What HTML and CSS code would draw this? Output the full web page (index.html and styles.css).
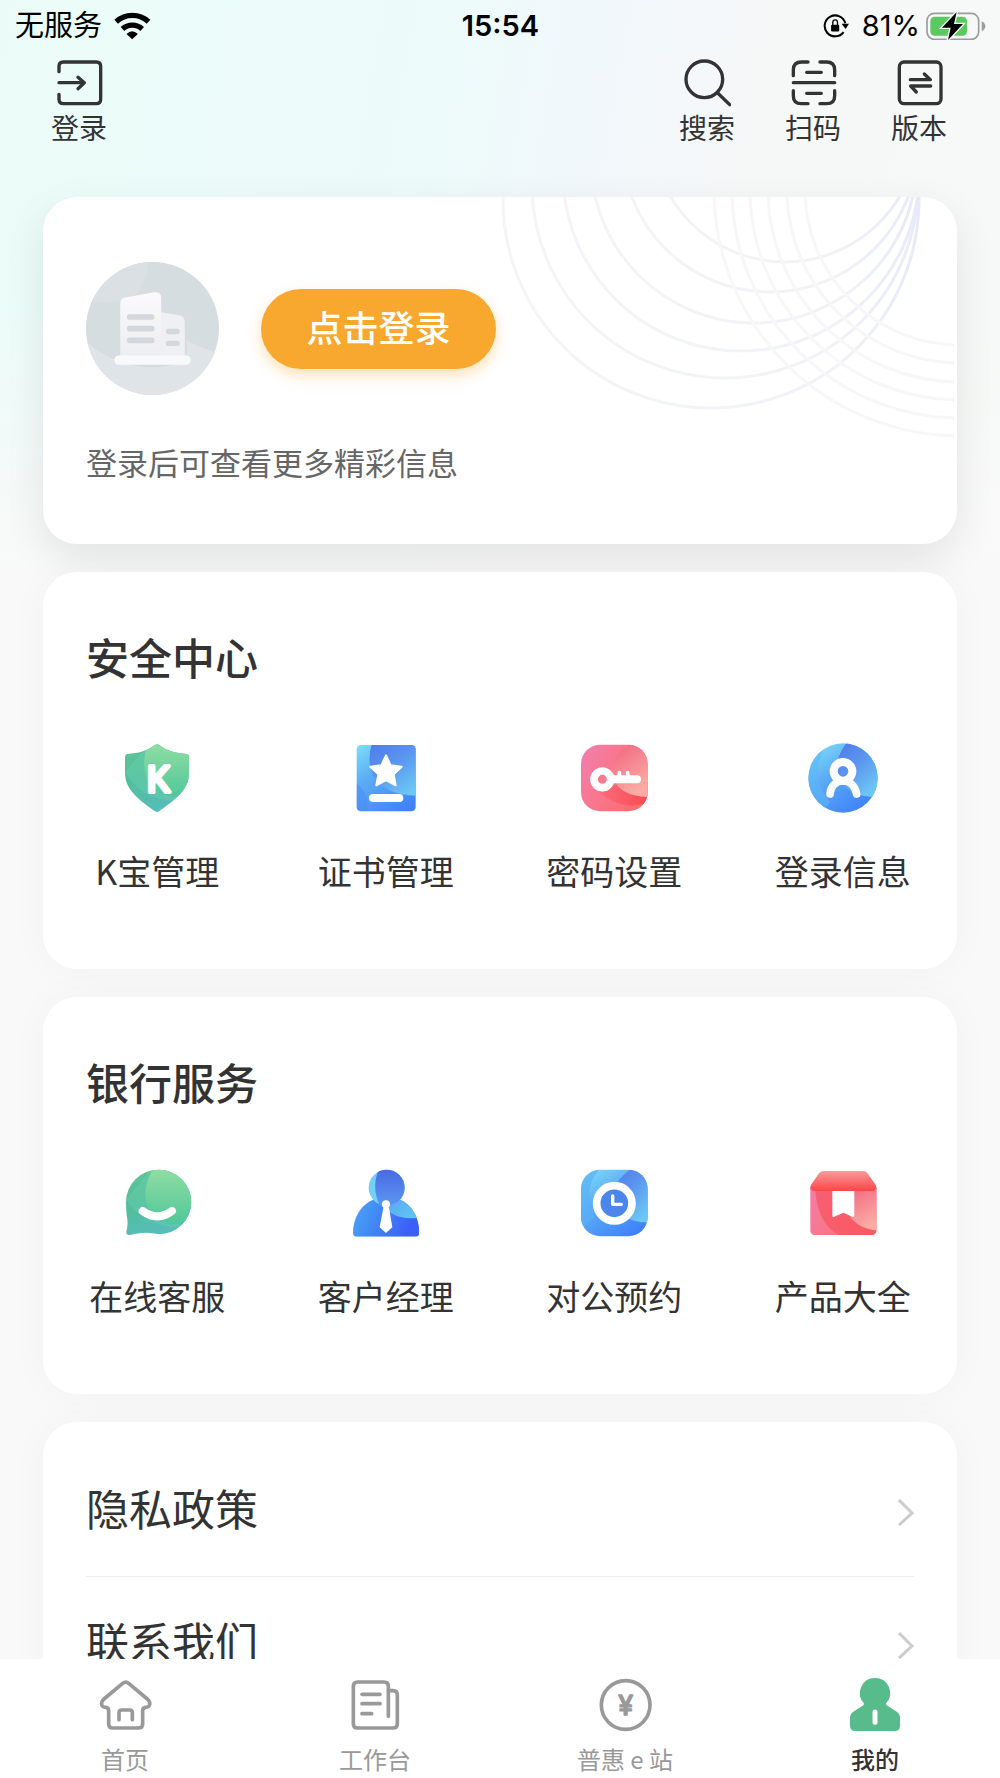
FILE: index.html
```html
<!DOCTYPE html>
<html lang="zh-CN">
<head>
    <meta charset="UTF-8">
    <meta name="viewport" content="width=device-width, initial-scale=1.0">
    <title>我的</title>
    <link rel="stylesheet" href="styles.css">
</head>
<body>
    <div class="app">
        <div class="page">
            <!-- 状态栏 -->
            <div class="status-bar">
                <div class="status-side">
                    <span>无服务</span>
                    <svg class="wifi" viewBox="0 0 110 84" aria-hidden="true">
                        <path d="M6 29A72 72 0 0 1 103 29M25 51A43 43 0 0 1 84 51" fill="none" stroke="#000" stroke-width="16"/>
                        <path d="M54 82L37 66Q54 49 71 66Z"/>
                    </svg>
                </div>
                <span class="status-time">15:54</span>
                <div class="status-side status-right">
                    <svg class="rotate-lock" viewBox="0 0 80 76" aria-hidden="true">
                        <path d="M61 56A31 31 0 1 1 66 30" fill="none" stroke="#000" stroke-width="6"/>
                        <path d="M55 31H77L67 47Z"/>
                        <rect x="24" y="34" width="24" height="20" rx="3"/>
                        <path d="M29 36V28Q29 20 36 20T43 28V36" fill="none" stroke="#000" stroke-width="4"/>
                    </svg>
                    <span>81%</span>
                    <svg class="battery" viewBox="0 0 180 84" aria-hidden="true">
                        <rect x="3" y="4" width="155" height="78" rx="22" fill="none" stroke="#9a9d9b" stroke-width="5"/>
                        <path d="M167 28Q178 34 178 43T167 58Z" fill="#9a9d9b"/>
                        <rect x="13" y="14" width="110" height="57" rx="13" fill="#5bc95f"/>
                        <path d="M92 0L48 47H74L66 84L111 36H84Z" stroke="#f4faf6" stroke-width="8" paint-order="stroke"/>
                    </svg>
                </div>
            </div>

            <!-- 顶部操作 -->
            <header class="top-actions">
                <button type="button" class="action">
                    <svg viewBox="0 0 144 144" aria-hidden="true"><path d="M12 38V22Q12 9 25 9H124Q137 9 137 22V121Q137 134 124 134H25Q12 134 12 121V106M12 71H88M69 55L88 71L69 89"/></svg>
                    <span>登录</span>
                </button>
                <div class="action-group">
                    <button type="button" class="action">
                        <svg viewBox="0 0 144 144" aria-hidden="true"><circle cx="64" cy="61" r="55"/><path d="M104 102L140 137"/></svg>
                        <span>搜索</span>
                    </button>
                    <button type="button" class="action">
                        <svg viewBox="0 0 144 144" aria-hidden="true"><path d="M13 50V33Q13 9 37 9H57M93 9H113Q137 9 137 33V50M137 95V110Q137 134 113 134H93M57 134H37Q13 134 13 110V95M13 71H137M53 40H97M53 103H97"/></svg>
                        <span>扫码</span>
                    </button>
                    <button type="button" class="action">
                        <svg viewBox="0 0 144 144" aria-hidden="true"><rect x="13" y="9" width="125" height="125" rx="14"/><path d="M46 62H106L88 45M107 81H47L64 99"/></svg>
                        <span>版本</span>
                    </button>
                </div>
            </header>

            <main class="cards">
                <!-- 登录卡片 -->
                <section class="card login-card">
                    <svg class="rings" viewBox="0 0 459 250" aria-hidden="true">
                        <defs>
                            <linearGradient id="ringLine" gradientUnits="userSpaceOnUse" x1="0" y1="0" x2="430" y2="0">
                                <stop offset="0" stop-color="#f4f5f7"/>
                                <stop offset=".8" stop-color="#f1f2f7"/>
                                <stop offset="1" stop-color="#e6e9fa"/>
                            </linearGradient>
                        </defs>
                        <g fill="none" stroke="url(#ringLine)" stroke-width="3">
                            <circle cx="216" cy="3" r="208"/>
                            <circle cx="230" cy="-12" r="193"/>
                            <circle cx="246" cy="-24" r="178"/>
                            <circle cx="259" cy="-37" r="163"/>
                            <circle cx="275" cy="-53" r="148"/>
                            <circle cx="290" cy="-68" r="133"/>
                        </g>
                        <g fill="none" stroke="#f7f7f9" stroke-width="3">
                            <circle cx="465" cy="-7" r="246"/>
                            <circle cx="465" cy="-7" r="228"/>
                            <circle cx="465" cy="-7" r="210"/>
                            <circle cx="465" cy="-7" r="192"/>
                            <circle cx="465" cy="-7" r="173"/>
                            <circle cx="465" cy="-7" r="155"/>
                        </g>
                    </svg>
                    <div class="login-row">
                        <svg class="avatar" viewBox="0 0 400 400" aria-hidden="true">
                            <defs>
                                <clipPath id="avatarClip"><circle cx="200" cy="200" r="200"/></clipPath>
                                <linearGradient id="tower" x1="0" y1="0" x2="0" y2="1">
                                    <stop offset="0" stop-color="#fbf9fb"/>
                                    <stop offset="1" stop-color="#eceef1"/>
                                </linearGradient>
                            </defs>
                            <g clip-path="url(#avatarClip)">
                                <rect width="400" height="400" fill="#d6dde0"/>
                                <path d="M0 0H188Q180 70 140 110Q80 130 0 115Z" fill="#dbe0e5"/>
                                <path d="M0 240Q120 340 260 310Q320 280 300 235Q350 260 400 275V400H0Z" fill="#dfe4e8"/>
                            </g>
                            <path d="M222 285V150L283 161Q297 165 297 180V285Z" fill="#eef0f3"/>
                            <path d="M103 285V126Q103 110 118 107L205 91Q226 89 226 107V285Z" fill="url(#tower)"/>
                            <rect x="85" y="281" width="230" height="28" rx="14" fill="#f8f9fa"/>
                            <g fill="#d3d8dc">
                                <rect x="123" y="157" width="83" height="17" rx="8"/>
                                <rect x="123" y="192" width="83" height="17" rx="8"/>
                                <rect x="123" y="227" width="83" height="17" rx="8"/>
                                <rect x="240" y="201" width="42" height="16" rx="8"/>
                                <rect x="240" y="237" width="42" height="16" rx="8"/>
                            </g>
                        </svg>
                        <button type="button" class="login-button">点击登录</button>
                    </div>
                    <p class="login-tip">登录后可查看更多精彩信息</p>
                </section>

                <!-- 安全中心 -->
                <section class="card service-card">
                    <h2>安全中心</h2>
                    <div class="service-grid">
                        <a class="service" href="#">
                            <svg viewBox="0 0 216 216" aria-hidden="true">
                                <defs>
                                    <linearGradient id="greenDeep" x1="0" y1="0" x2=".4" y2="1">
                                        <stop offset="0" stop-color="#62c796"/>
                                        <stop offset=".5" stop-color="#52be9b"/>
                                        <stop offset="1" stop-color="#56bdbb"/>
                                    </linearGradient>
                                    <linearGradient id="greenLight" x1="0" y1="0" x2="0" y2="1">
                                        <stop offset="0" stop-color="#92dea2"/>
                                        <stop offset="1" stop-color="#50c79b"/>
                                    </linearGradient>
                                    <clipPath id="shieldClip"><path d="M100 10Q108 4 116 10C138 27 165 34 196 36Q204 37 204 45V92C204 142 166 170 114 208Q108 212 102 208C50 170 12 142 12 92V45Q12 37 20 36C51 34 78 27 100 10Z"/></clipPath>
                                </defs>
                                <g clip-path="url(#shieldClip)">
                                    <rect width="216" height="216" fill="url(#greenDeep)"/>
                                    <path d="M12 90Q60 170 150 176L216 150V0H90Z" fill="#6bd0b0" opacity=".45"/>
                                    <path d="M80 0Q55 90 90 135Q125 168 180 163L216 130V0Z" fill="url(#greenLight)"/>
                                </g>
                                <text class="shield-letter" x="112" y="149">K</text>
                            </svg>
                            <span>K宝管理</span>
                        </a>
                        <a class="service" href="#">
                            <svg viewBox="0 0 216 216" aria-hidden="true">
                                <defs>
                                    <linearGradient id="blueBase" x1="0" y1="0" x2=".7" y2="1">
                                        <stop offset="0" stop-color="#84e8f8"/>
                                        <stop offset=".45" stop-color="#5cacf5"/>
                                        <stop offset="1" stop-color="#3f82fa"/>
                                    </linearGradient>
                                    <linearGradient id="blueTop" x1="0" y1="0" x2=".7" y2="1">
                                        <stop offset="0" stop-color="#4f78e8"/>
                                        <stop offset=".5" stop-color="#5b96ef"/>
                                        <stop offset="1" stop-color="#6cc8f4"/>
                                    </linearGradient>
                                    <clipPath id="bookClip"><rect x="20" y="9" width="177" height="199" rx="13"/></clipPath>
                                </defs>
                                <g clip-path="url(#bookClip)">
                                    <rect width="216" height="216" fill="url(#blueBase)"/>
                                    <path d="M20 125Q60 155 50 208H20Z" fill="#4a8cf4" opacity=".5"/>
                                    <path d="M67 0Q48 60 72 105Q112 165 216 161V0Z" fill="url(#blueTop)"/>
                                </g>
                                <path d="M108 40L122 70L155 74L131 97L137 130L108 114L79 130L85 97L61 74L94 70Z" fill="#fff" stroke="#fff" stroke-width="6" stroke-linejoin="round"/>
                                <rect x="57" y="156" width="103" height="24" rx="12" fill="#fff"/>
                            </svg>
                            <span>证书管理</span>
                        </a>
                        <a class="service" href="#">
                            <svg viewBox="0 0 216 216" aria-hidden="true">
                                <defs>
                                    <linearGradient id="pinkBase" x1="0" y1="0" x2="1" y2=".5">
                                        <stop offset="0" stop-color="#ef7fb6"/>
                                        <stop offset=".5" stop-color="#f9778e"/>
                                        <stop offset="1" stop-color="#fa6b72"/>
                                    </linearGradient>
                                    <linearGradient id="pinkTop" x1="0" y1="0" x2=".5" y2="1">
                                        <stop offset="0" stop-color="#f0607d"/>
                                        <stop offset="1" stop-color="#fcaca4"/>
                                    </linearGradient>
                                    <linearGradient id="redBand" x1="0" y1="0" x2="1" y2="0">
                                        <stop offset="0" stop-color="#f9707e"/>
                                        <stop offset="1" stop-color="#fa4a50"/>
                                    </linearGradient>
                                    <clipPath id="squareClip"><rect x="9" y="8" width="200" height="200" rx="58"/></clipPath>
                                </defs>
                                <g clip-path="url(#squareClip)">
                                    <rect width="216" height="216" fill="url(#pinkBase)"/>
                                    <path d="M50 135Q115 210 209 182V120Z" fill="url(#redBand)"/>
                                    <path d="M165 0Q94 45 101 100Q120 165 216 165V0Z" fill="url(#pinkTop)"/>
                                </g>
                                <circle cx="73" cy="112" r="25" fill="none" stroke="#fff" stroke-width="23"/>
                                <path d="M105 112H177" fill="none" stroke="#fff" stroke-width="24" stroke-linecap="round"/>
                                <path d="M124 105V92M149 105V92" fill="none" stroke="#fff" stroke-width="11" stroke-linecap="round"/>
                            </svg>
                            <span>密码设置</span>
                        </a>
                        <a class="service" href="#">
                            <svg viewBox="0 0 216 216" aria-hidden="true">
                                <defs>
                                    <clipPath id="roundClip"><circle cx="108" cy="108" r="104"/></clipPath>
                                </defs>
                                <g clip-path="url(#roundClip)">
                                    <rect width="216" height="216" fill="url(#blueBase)"/>
                                    <path d="M0 80Q20 0 60 0Q0 110 70 180L40 216H0Z" fill="#5cb6f8" opacity=".6"/>
                                    <path d="M120 0Q70 70 100 115Q130 168 216 165V0Z" fill="url(#blueTop)"/>
                                </g>
                                <circle cx="108" cy="88" r="28" fill="none" stroke="#fff" stroke-width="24"/>
                                <path d="M69 156C72 130 88 117 108 117S144 130 149 156" fill="none" stroke="#fff" stroke-width="23" stroke-linecap="round"/>
                            </svg>
                            <span>登录信息</span>
                        </a>
                    </div>
                </section>

                <!-- 银行服务 -->
                <section class="card service-card">
                    <h2>银行服务</h2>
                    <div class="service-grid">
                        <a class="service" href="#">
                            <svg viewBox="0 0 216 216" aria-hidden="true">
                                <defs>
                                    <clipPath id="bubbleClip"><path d="M114 8A97 97 0 1 1 114 202Q88 195 62 198Q44 200 26 204Q15 205 16 194Q23 170 17 145Q15 125 15 105A98 97 0 0 1 114 8Z"/></clipPath>
                                </defs>
                                <g clip-path="url(#bubbleClip)">
                                    <rect width="216" height="216" fill="url(#greenDeep)"/>
                                    <path d="M15 100Q70 175 170 182L216 150V0H95Z" fill="#6bd0b0" opacity=".4"/>
                                    <path d="M98 0Q55 80 85 125Q125 178 190 171L216 150V0Z" fill="url(#greenLight)"/>
                                </g>
                                <path d="M65 132Q109 164 153 132" fill="none" stroke="#fff" stroke-width="24" stroke-linecap="round"/>
                            </svg>
                            <span>在线客服</span>
                        </a>
                        <a class="service" href="#">
                            <svg viewBox="0 0 216 216" aria-hidden="true">
                                <defs>
                                    <linearGradient id="coat" x1="0" y1="0" x2="1" y2=".4">
                                        <stop offset="0" stop-color="#54b4f6"/>
                                        <stop offset=".5" stop-color="#438df5"/>
                                        <stop offset="1" stop-color="#3c5ffa"/>
                                    </linearGradient>
                                    <linearGradient id="chest" x1="0" y1="0" x2="1" y2=".5">
                                        <stop offset="0" stop-color="#5c9cf1"/>
                                        <stop offset="1" stop-color="#5cc4f4"/>
                                    </linearGradient>
                                    <linearGradient id="face" x1="0" y1="0" x2="0" y2="1">
                                        <stop offset="0" stop-color="#4768e4"/>
                                        <stop offset="1" stop-color="#5d98f0"/>
                                    </linearGradient>
                                    <clipPath id="headClip"><circle cx="110" cy="62" r="54"/></clipPath>
                                    <clipPath id="coatClip"><path d="M70 98H150C184 112 208 150 208 197Q208 209 196 209H21Q9 209 9 197C9 150 34 112 70 98Z"/></clipPath>
                                </defs>
                                <g clip-path="url(#coatClip)">
                                    <rect width="216" height="216" fill="url(#coat)"/>
                                    <path d="M75 90Q120 165 210 152V90Z" fill="url(#chest)"/>
                                </g>
                                <g clip-path="url(#headClip)">
                                    <rect width="216" height="130" fill="#72d0f6"/>
                                    <path d="M90 0Q60 60 92 120H170V0Z" fill="url(#face)"/>
                                </g>
                                <circle cx="108" cy="112" r="12" fill="#fff"/>
                                <path d="M100 122H117L127 181L108 198L89 181Z" fill="#fff"/>
                            </svg>
                            <span>客户经理</span>
                        </a>
                        <a class="service" href="#">
                            <svg viewBox="0 0 216 216" aria-hidden="true">
                                <g clip-path="url(#squareClip)">
                                    <rect width="216" height="216" fill="url(#blueBase)"/>
                                    <path d="M0 0H70Q10 60 50 150L0 190Z" fill="#58b0f6" opacity=".7"/>
                                    <path d="M168 0Q90 50 110 110Q135 168 216 166V0Z" fill="url(#blueTop)"/>
                                </g>
                                <circle cx="109" cy="109" r="53" fill="#4d86ea" stroke="#fff" stroke-width="23"/>
                                <path d="M104 87V112H130" fill="none" stroke="#fff" stroke-width="10" stroke-linecap="round" stroke-linejoin="round"/>
                            </svg>
                            <span>对公预约</span>
                        </a>
                        <a class="service" href="#">
                            <svg viewBox="0 0 216 216" aria-hidden="true">
                                <defs>
                                    <linearGradient id="roof" x1="0" y1="0" x2="0" y2="1">
                                        <stop offset="0" stop-color="#fb9a9b"/>
                                        <stop offset="1" stop-color="#fb4547"/>
                                    </linearGradient>
                                    <clipPath id="shopClip"><rect x="10" y="50" width="198" height="154" rx="13"/></clipPath>
                                </defs>
                                <g clip-path="url(#shopClip)">
                                    <rect width="216" height="216" fill="url(#pinkBase)"/>
                                    <path d="M24 60Q30 180 110 210H216V60Z" fill="#f9505a" opacity=".65"/>
                                    <path d="M112 60Q100 180 216 192V60Z" fill="url(#pinkTop)"/>
                                </g>
                                <path d="M50 12H168Q178 12 184 22L206 54Q209 60 207 65Q204 72 196 72H22Q14 72 11 65Q9 60 12 54L34 22Q40 12 50 12Z" fill="url(#roof)"/>
                                <path d="M76 72H142V146Q142 152 136 149L109 137L82 149Q76 152 76 146Z" fill="#fff"/>
                            </svg>
                            <span>产品大全</span>
                        </a>
                    </div>
                </section>

                <!-- 列表 -->
                <section class="card list-card">
                    <a class="list-row" href="#">
                        <span>隐私政策</span>
                        <svg viewBox="0 0 18 30" aria-hidden="true"><path d="M3 3L16 16L3 28"/></svg>
                    </a>
                    <a class="list-row" href="#">
                        <span>联系我们</span>
                        <svg viewBox="0 0 18 30" aria-hidden="true"><path d="M3 3L16 16L3 28"/></svg>
                    </a>
                </section>
            </main>
        </div>

        <!-- 底部导航 -->
        <nav class="tab-bar">
            <a class="tab" href="#">
                <svg viewBox="0 0 168 168" aria-hidden="true"><path d="M77 19Q86 12 95 19L151 66Q160 74 158 83Q156 91 146 91Q137 92 137 101V140Q137 153 124 153H48Q35 153 35 140V101Q35 92 26 91Q16 91 14 83Q12 74 21 66ZM66 128V107Q66 99 74 99H98Q106 99 106 107V128"/></svg>
                <span>首页</span>
            </a>
            <a class="tab" href="#">
                <svg viewBox="0 0 168 168" aria-hidden="true"><path d="M124 118V28Q124 15 111 15H32Q19 15 19 28V140Q19 153 32 153H138Q151 153 151 140V54Q151 41 138 41H126M45 52H99M45 80H99M45 110H74"/></svg>
                <span>工作台</span>
            </a>
            <a class="tab" href="#">
                <svg viewBox="0 0 168 168" aria-hidden="true"><circle cx="86" cy="84" r="73"/><text class="yen" x="86" y="114">¥</text></svg>
                <span>普惠 e 站</span>
            </a>
            <a class="tab active" href="#">
                <svg viewBox="0 0 168 168" aria-hidden="true"><path class="solid" d="M84 3A45 45 0 0 1 117 79L118 84L149 104Q159 111 159 122V146Q159 162 143 162H25Q9 162 9 146V122Q9 111 19 104L50 84L51 79A45 45 0 0 1 84 3Z"/><path class="slot" d="M84 105V136"/></svg>
                <span>我的</span>
            </a>
        </nav>
    </div>
</body>
</html>
```
FILE: styles.css
```css
* {
    box-sizing: border-box;
}

body {
    margin: 0;
    font-family: "Noto Sans CJK SC", sans-serif;
    color: #333;
    background-color: #f9f9f9;
}

a {
    color: inherit;
    text-decoration: none;
}

button {
    padding: 0;
    border: none;
    background: none;
    font-family: inherit;
    color: inherit;
    cursor: pointer;
}

svg {
    display: block;
}

.app {
    display: flex;
    flex-direction: column;
    height: 100vh;
}

.page {
    flex: 1;
    min-height: 0;
    overflow-y: auto;
    scrollbar-width: none;
    background-image:
        linear-gradient(to bottom, rgba(249, 249, 249, 0) 300px, #f9f9f9 570px),
        linear-gradient(100deg, #ebfcf8 0%, #ecfbfa 32%, #f1f7fb 48%, #f6f8f8 60%, #f6faf6 100%);
}

/* 状态栏 */
.status-bar {
    display: flex;
    align-items: center;
    height: 51px;
    padding: 0 14px 0 15px;
    font-size: 29px;
    line-height: 51px;
    color: #000;
}

.status-side {
    flex: 1;
    display: flex;
    align-items: center;
    gap: 12px;
    font-family: Inter, "Noto Sans CJK SC", sans-serif;
}

.status-right {
    justify-content: flex-end;
    gap: 6px;
}

.status-time {
    font-family: Inter, sans-serif;
    font-weight: 600;
}

.wifi {
    width: 37px;
    height: 28px;
}

.rotate-lock {
    width: 27px;
    height: 26px;
    margin-right: 6px;
}

.battery {
    width: 60px;
    height: 28px;
}

/* 顶部操作 */
.top-actions {
    display: flex;
    justify-content: space-between;
    padding: 8px 53px 52px 51px;
}

.action-group {
    display: flex;
    gap: 50px;
}

.action {
    display: flex;
    flex-direction: column;
    align-items: center;
    gap: 2px;
    font-size: 28px;
    line-height: 36px;
}

.action svg {
    width: 48px;
    height: 48px;
    fill: none;
    stroke: #333;
    stroke-width: 10;
    stroke-linecap: round;
    stroke-linejoin: round;
}

/* 卡片 */
.cards {
    display: flex;
    flex-direction: column;
    gap: 28px;
    padding: 0 43px 28px;
}

.card {
    background-color: #fff;
    border-radius: 34px;
    box-shadow: 0 0 40px rgba(0, 0, 0, 0.03);
}

.login-card {
    position: relative;
    padding: 65px 43px 59px;
    box-shadow: 0 14px 40px rgba(0, 0, 0, 0.09);
}

.rings {
    position: absolute;
    top: 0;
    right: 3px;
    width: 459px;
    height: 250px;
}

.login-row {
    display: flex;
    align-items: center;
    gap: 42px;
}

.avatar {
    width: 133px;
    height: 133px;
}

.login-button {
    width: 235px;
    height: 80px;
    padding-bottom: 6px;
    border-radius: 40px;
    background-color: #f8a82f;
    box-shadow: 0 6px 14px rgba(248, 168, 47, 0.35);
    color: #fff;
    font-size: 36px;
    font-weight: 500;
    line-height: 74px;
}

.login-tip {
    margin: 44px 0 0;
    font-size: 31px;
    line-height: 46px;
    color: #666;
}

.service-card {
    position: relative;
    padding: 54px 0 74px;
}

.service-card h2 {
    margin: 0 43px 56px;
    font-size: 43px;
    font-weight: 500;
    line-height: 60px;
}

.service-grid {
    display: grid;
    grid-template-columns: repeat(4, 1fr);
}

.service {
    display: flex;
    flex-direction: column;
    align-items: center;
    gap: 33px;
    font-size: 34px;
    line-height: 48px;
}

.service svg {
    width: 72px;
    height: 72px;
}

.shield-letter {
    fill: #fff;
    stroke: #fff;
    stroke-width: 12;
    stroke-linejoin: round;
    font-family: Roboto, sans-serif;
    font-size: 108px;
    font-weight: 400;
    text-anchor: middle;
}

.list-card {
    position: relative;
    padding: 21px 43px;
}

.list-row {
    display: flex;
    align-items: center;
    justify-content: space-between;
    height: 133px;
    padding-top: 4px;
    font-size: 43px;
    line-height: 60px;
}

.list-row span {
    padding-bottom: 10px;
}

.list-row + .list-row {
    border-top: 1px solid #eee;
}

.list-row svg {
    width: 18px;
    height: 30px;
    fill: none;
    stroke: #ccc;
    stroke-width: 3;
}

/* 底部导航 */
.tab-bar {
    display: grid;
    grid-template-columns: repeat(4, 1fr);
    padding: 18px 0 3px;
    background-color: #fff;
}

.tab {
    display: flex;
    flex-direction: column;
    align-items: center;
    gap: 10px;
    font-size: 24px;
    line-height: 32px;
    color: #999;
}

.tab svg {
    width: 56px;
    height: 56px;
    fill: none;
    stroke: #999;
    stroke-width: 11;
    stroke-linecap: round;
    stroke-linejoin: round;
}

.tab .yen {
    fill: #999;
    stroke-width: 5;
    font-family: Roboto, sans-serif;
    font-size: 82px;
    font-weight: 400;
    text-anchor: middle;
}

.tab.active {
    color: #333;
    font-weight: 500;
}

.tab .solid {
    fill: #57bb8c;
    stroke: none;
}

.tab .slot {
    stroke: #fff;
    stroke-width: 15;
}
```
